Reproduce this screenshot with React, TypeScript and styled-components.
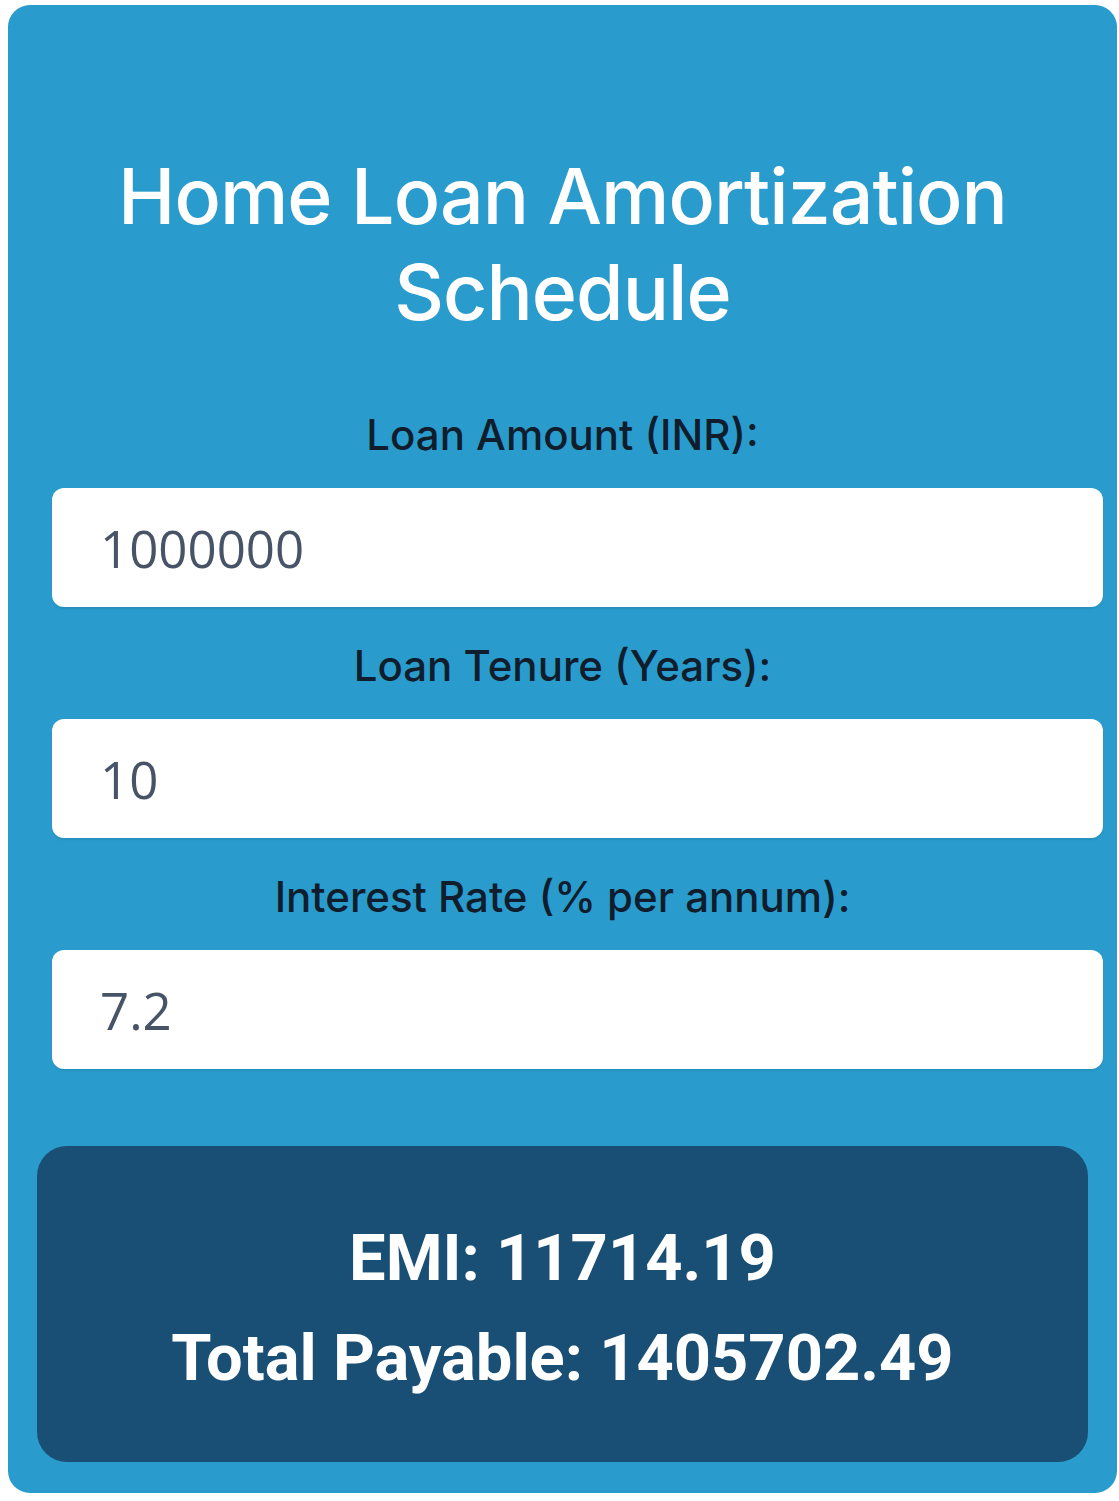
import React from 'react';
import styled, { createGlobalStyle } from 'styled-components';

const GlobalStyle = createGlobalStyle`
  html, body {
    margin: 0;
    padding: 0;
    background: #ffffff;
  }
  * {
    box-sizing: border-box;
  }
`;

const Card = styled.div`
  width: 1109px;
  height: 1488px;
  margin: 5px 0 0 8px;
  padding: 143px 29px 31px;
  background: #299ccd;
  border-radius: 22px;
  display: flex;
  flex-direction: column;
`;

const Title = styled.h1`
  margin: 0 0 71px;
  font-family: Inter, 'Noto Sans', sans-serif;
  font-weight: 500;
  font-size: 77px;
  line-height: 96px;
  letter-spacing: -1px;
  color: #ffffff;
  text-align: center;
`;

const Form = styled.div`
  display: flex;
  flex-direction: column;
`;

const Label = styled.label`
  display: block;
  font-family: Inter, 'Noto Sans', sans-serif;
  font-weight: 500;
  font-size: 42px;
  line-height: 48px;
  color: #0f1d2c;
  text-align: center;
  margin-bottom: 29px;
`;

const Field = styled.div`
  display: flex;
  flex-direction: column;
  margin-bottom: 35px;
`;

const Input = styled.input`
  width: 1051px;
  height: 119px;
  margin-left: 15px;
  padding: 0 48px;
  border: none;
  border-radius: 12px;
  background: #ffffff;
  box-shadow: 0 2px 2px rgba(0, 0, 0, 0.08);
  font-family: 'Open Sans', sans-serif;
  font-size: 51px;
  color: #475467;
  outline: none;
`;

const Result = styled.div`
  margin-top: 42px;
  height: 317px;
  padding-top: 8px;
  border-radius: 30px;
  background: #1a4f75;
  display: flex;
  flex-direction: column;
  align-items: center;
  justify-content: center;
`;

const ResultLine = styled.p`
  margin: 0;
  font-family: Roboto, 'Liberation Sans', sans-serif;
  font-weight: 700;
  font-size: 65px;
  line-height: 100px;
  color: #ffffff;
  text-align: center;
`;

const fields = [
  { label: 'Loan Amount (INR):', value: '1000000' },
  { label: 'Loan Tenure (Years):', value: '10' },
  { label: 'Interest Rate (% per annum):', value: '7.2' },
];

export default function App() {
  return (
    <>
      <GlobalStyle />
      <Card>
        <Title>
          Home Loan Amortization
          <br />
          Schedule
        </Title>
        <Form>
          {fields.map((f) => (
            <Field key={f.label}>
              <Label>{f.label}</Label>
              <Input type="text" defaultValue={f.value} />
            </Field>
          ))}
        </Form>
        <Result>
          <ResultLine>EMI: 11714.19</ResultLine>
          <ResultLine>Total Payable: 1405702.49</ResultLine>
        </Result>
      </Card>
    </>
  );
}
